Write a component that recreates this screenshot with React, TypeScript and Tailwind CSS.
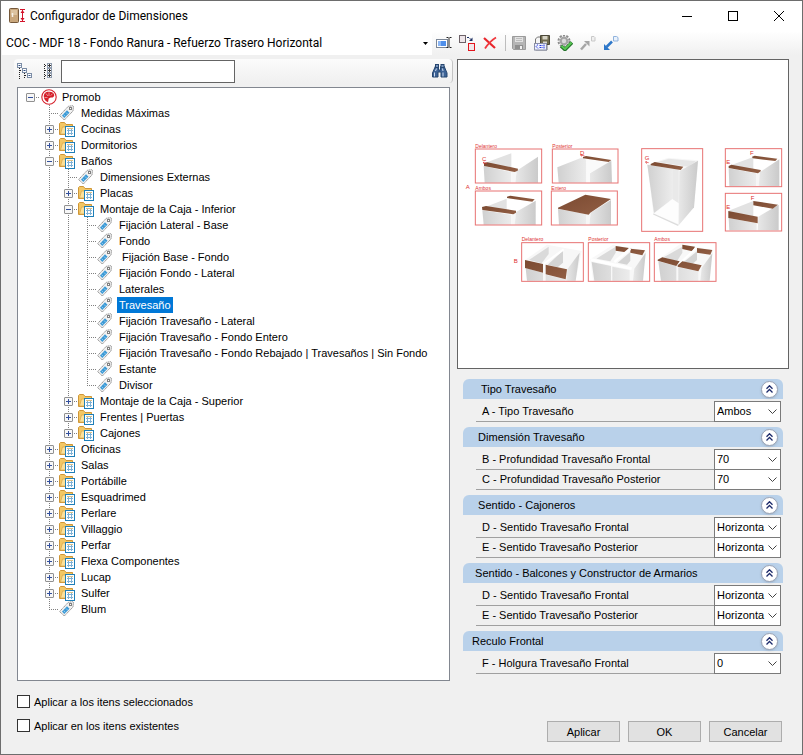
import { FunctionComponent, ReactNode } from "react";

type TreeNode = {
  label: string;
  kind: "root" | "folder" | "tag";
  selected?: boolean;
  children?: TreeNode[];
};

type Field = { label: string; value: string };
type Section = { title: string; fields: Field[] };

const folder = (label: string, children?: TreeNode[]): TreeNode => ({
  label,
  kind: "folder",
  children,
});

const tag = (label: string, selected?: boolean): TreeNode => ({
  label,
  kind: "tag",
  selected,
});

const TREE: TreeNode = {
  label: "Promob",
  kind: "root",
  children: [
    tag("Medidas Máximas"),
    folder("Cocinas"),
    folder("Dormitorios"),
    folder("Baños", [
      tag("Dimensiones Externas"),
      folder("Placas"),
      folder("Montaje de la Caja - Inferior", [
        tag("Fijación Lateral - Base"),
        tag("Fondo"),
        tag(" Fijación Base - Fondo"),
        tag("Fijación Fondo - Lateral"),
        tag("Laterales"),
        tag("Travesaño", true),
        tag("Fijación Travesaño - Lateral"),
        tag("Fijación Travesaño - Fondo Entero"),
        tag("Fijación Travesaño - Fondo Rebajado | Travesaños | Sin Fondo"),
        tag("Estante"),
        tag("Divisor"),
      ]),
      folder("Montaje de la Caja - Superior"),
      folder("Frentes | Puertas"),
      folder("Cajones"),
    ]),
    folder("Oficinas"),
    folder("Salas"),
    folder("Portábille"),
    folder("Esquadrimed"),
    folder("Perlare"),
    folder("Villaggio"),
    folder("Perfar"),
    folder("Flexa Componentes"),
    folder("Lucap"),
    folder("Sulfer"),
    tag("Blum"),
  ],
};

const SECTIONS: Section[] = [
  {
    title: "   Tipo Travesaño",
    fields: [{ label: "A - Tipo Travesaño", value: "Ambos" }],
  },
  {
    title: "  Dimensión Travesaño",
    fields: [
      { label: "B - Profundidad Travesaño Frontal", value: "70" },
      { label: "C - Profundidad Travesaño Posterior", value: "70" },
    ],
  },
  {
    title: "  Sentido - Cajoneros",
    fields: [
      { label: "D - Sentido Travesaño Frontal", value: "Horizonta" },
      { label: "E - Sentido Travesaño Posterior", value: "Horizonta" },
    ],
  },
  {
    title: " Sentido - Balcones y Constructor de Armarios",
    fields: [
      { label: "D - Sentido Travesaño Frontal", value: "Horizonta" },
      { label: "E - Sentido Travesaño Posterior", value: "Horizonta" },
    ],
  },
  {
    title: "Reculo Frontal",
    fields: [{ label: "F - Holgura Travesaño Frontal", value: "0" }],
  },
];

const Icon: FunctionComponent<{ children: ReactNode }> = ({ children }) => (
  <svg viewBox="0 0 16 16" className="w-4 h-4 shrink-0" fill="none">
    {children}
  </svg>
);

const AppIcon = () => (
  <svg viewBox="0 0 17 16" className="w-[17px] h-4 shrink-0" fill="none">
    <rect x="0.5" y="0.5" width="9" height="14" rx="1" fill="#c9a77c" stroke="#75583a" />
    <path d="M2 2h6v5H2z" fill="#dcc3a0" />
    <path d="M3.5 5v4" stroke="#f7f1e8" strokeWidth="1.5" />
    <path d="M11 1.5h5M11 13.5h5M13.5 2v11" stroke="#d3122a" />
    <path d="M11.500 5l2-3 2 3zM11.500 10l2 3 2-3z" fill="#d3122a" />
  </svg>
);

const PromobIcon = () => (
  <Icon>
    <circle cx="8" cy="8" r="7.2" fill="#fff" stroke="#d5202b" strokeWidth="1.1" />
    <path
      d="M8.500 2.800C5 2.300 2.700 4.500 2.800 7.500c0 2.500 1.600 4.800 4.200 5.700l.7-3.700 2-1c2.300.3 3.700-.9 3.500-2.800C12.700 3.900 10.900 2.900 8.500 2.800z"
      fill="#d5202b"
    />
    <path d="M8 3.500v3.500M5 4.500l2 2.500M3.500 8.500l3 0M9.500 6.500l2-1.500" stroke="#fff" strokeWidth="0.5" />
  </Icon>
);

const FolderIcon = () => (
  <Icon>
    <path d="M.5 13.500v-11l1-1h4l1.500 2h6.500v10z" fill="#f3c765" stroke="#cf9637" />
    <path d="M1.500 13l2-7h11l-1 7z" fill="#fbe09a" stroke="#d9a648" strokeWidth="0.7" />
    <rect x="6.500" y="5.500" width="9" height="10" fill="#fff" stroke="#1f7fb8" />
    <path d="M8 9.500h6M8 12.500h6M9.500 7.500v6.500M12.500 7.500v6.500" stroke="#7fb2d6" />
    <path d="M8 7.500h6" stroke="#d9c089" />
  </Icon>
);

const TagIcon = () => (
  <Icon>
    <path
      d="M.6 10.500L9.300 1.300l4.500-.6.700.6-.5 4.700-8.700 9z"
      fill="#f1f1f1"
      stroke="#929292"
      strokeDasharray="1.500 .5"
    />
    <path d="M3 10.500l5-5.200 2.500 2.400-5.200 5.300z" fill="#3c9ad6" />
    <path d="M4.700 9.700l1.500 1.600M7 7.500L8.500 9" stroke="#b8def5" strokeWidth="0.7" />
    <rect x="10.500" y="2.500" width="2" height="2" fill="#fff" stroke="#808080" />
  </Icon>
);

const NODE_ICONS = { root: PromobIcon, folder: FolderIcon, tag: TagIcon };

const RenameIcon = () => (
  <Icon>
    <rect x=".5" y="4.500" width="11" height="8" fill="#fff" stroke="#7c8797" />
    <rect x="2" y="6" width="8" height="5" fill="#4f8fea" />
    <path d="M2 6h3v5H2z" fill="#8bb6f4" />
    <path d="M10.500 2.500h2M13.500 2.500h2M13 3v9M10.500 12.500h2M13.500 12.500h2" stroke="#222" />
  </Icon>
);

const ReplaceIcon = () => (
  <Icon>
    <rect x=".5" y=".5" width="6" height="7" fill="#eee6ea" stroke="#6d6268" />
    <rect x="9.500" y="8.500" width="6" height="7" fill="#f1e7ea" stroke="#e3151d" />
    <path d="M8 2.500h2l2.500 2.500" stroke="#1c2f63" strokeDasharray="2 1" />
    <path d="M13.500 2.500V6H10z" fill="#1c2f63" />
  </Icon>
);

const DeleteIcon = () => (
  <Icon>
    <path d="M2 3l11 10" stroke="#e8252b" strokeWidth="2.200" />
    <path d="M14 2.500C9 5.500 6 9 3 13.500" stroke="#f0383d" strokeWidth="1.800" />
  </Icon>
);

const SaveIcon = () => (
  <Icon>
    <path d="M1.500 1.500h13v13h-12l-1-1z" fill="#b5b5b5" stroke="#9b9b9b" />
    <path d="M4 2h8v5H4z" fill="#e2e2e2" />
    <path d="M5 3.500h6M5 5.500h6" stroke="#bdbdbd" />
    <path d="M4 10h8v4H4z" fill="#8f8f8f" />
    <path d="M9 11h2v3H9z" fill="#f0f0f0" />
  </Icon>
);

const SaveAsIcon = () => (
  <Icon>
    <path d="M1.500 15V4l2-2H13v13z" fill="#f5f5f5" stroke="#777" />
    <path d="M6.500 .5h9v9h-9z" fill="#6f6a4f" stroke="#4a4738" />
    <path d="M8.500 1h5v3.500h-5z" fill="#d6d3c5" />
    <path d="M9 6.500h4v3H9z" fill="#d9d6cc" />
    <rect x=".5" y="8.500" width="12" height="6.500" fill="#eef1fc" stroke="#8a8fa8" />
    <path d="M4 9.500l-2 2 2 2M5.500 10.500h3M5.500 12.500h3M10 9.500v4" stroke="#2636e0" strokeDasharray="2 .5" />
  </Icon>
);

const GearCheckIcon = () => (
  <Icon>
    <circle cx="7" cy="6" r="5.500" stroke="#8d8d8d" strokeWidth="2" strokeDasharray="2.200 1.250" />
    <circle cx="7" cy="6" r="3.300" fill="#dcdcdc" stroke="#a5a5a5" strokeWidth="2.200" />
    <path d="M4 11l4 3.500L15 7.500" stroke="#23722a" strokeWidth="3.600" />
    <path d="M4.500 11L8 14l6.500-6.500" stroke="#58c752" strokeWidth="2" />
  </Icon>
);

// both arrows share the small page in the upper right corner
const ExportIcon = () => (
  <Icon>
    <path d="M1 14.500L6 9" stroke="#a6a6a6" strokeWidth="2.500" />
    <path d="M4 6h5.500v5.500z" fill="#a6a6a6" />
    <path d="M11.500 1.500h2.500l1 1v3.500h-3.500z" fill="#f0f0f0" stroke="#c8c8c8" />
  </Icon>
);

const ImportIcon = () => (
  <Icon>
    <path d="M3.500 12L9 6.500" stroke="#2d77c9" strokeWidth="2.500" />
    <path d="M1 9v6h6z" fill="#2d77c9" />
    <path d="M10.500 1.500h3l1.500 1v3.500h-4.500z" fill="#eaf2fc" stroke="#8fb2dd" />
  </Icon>
);

const CollapseIcon = () => (
  <Icon>
    <path d="M2.500 5v11M7.500 10v6M3 7.500h2M8 12.500h2" stroke="#222" strokeDasharray="1 1" />
    <g fill="#fff" stroke="#7b8ca5">
      <rect x=".5" y=".5" width="4" height="4" />
      <rect x="5.500" y="5.500" width="4" height="4" />
      <rect x="10.500" y="10.500" width="4" height="4" />
    </g>
    <path d="M1.500 2.500h2M6.500 7.500h2M11.500 12.500h2" stroke="#2d4e86" />
  </Icon>
);

const ExpandIcon = () => (
  <Icon>
    <path d="M4.500 1v15M5 2.500h2M5 7.500h2M5 12.500h2" stroke="#222" strokeDasharray="1 1" />
    <g fill="#fff" stroke="#8f9bad">
      <rect x="7.500" y=".5" width="4" height="4" />
      <rect x="7.500" y="5.500" width="4" height="4" />
      <rect x="7.500" y="10.500" width="4" height="4" />
    </g>
    <path d="M8 2.500h3M8 7.500h3M8 12.500h3M9.500 1v3M9.500 6v3M9.500 11v3" stroke="#333" />
  </Icon>
);

const BinocularsIcon = () => (
  <Icon>
    <path d="M3.500 3L.5 10v4h5.500V9h3v5h6v-4l-3-7-3.500.5V7h-2V3.500z" fill="#3d6396" stroke="#27466f" />
    <rect x="3.500" y="1.500" width="3" height="3" fill="#7895bd" stroke="#27466f" />
    <rect x="9" y="1.500" width="3" height="3" fill="#7895bd" stroke="#27466f" />
    <path d="M2.500 9.500v4M11 9.500v4M4.500 5.500l-1 2.500M10.500 5.500l.5 2.500" stroke="#d0ddf0" />
  </Icon>
);

const TOOLS: { label: string; icon: FunctionComponent }[] = [
  { label: "Guardar", icon: SaveIcon },
  { label: "Guardar como", icon: SaveAsIcon },
  { label: "Validar", icon: GearCheckIcon },
  { label: "Exportar", icon: ExportIcon },
  { label: "Importar", icon: ImportIcon },
];

const ToolButton: FunctionComponent<{ label: string; children: ReactNode }> = ({
  label,
  children,
}) => (
  <button
    type="button"
    aria-label={label}
    className="w-[23px] h-[23px] shrink-0 flex items-center justify-center"
  >
    {children}
  </button>
);

const TitleBar = () => (
  <header className="flex items-center h-[30px] pl-2 bg-white">
    <AppIcon />
    <h1 className="flex-1 pl-1 font-[Roboto,'Noto_Sans',sans-serif] text-[12px] leading-4">
      Configurador de Dimensiones
    </h1>
    <button type="button" aria-label="Minimizar" className="w-[46px] h-full flex items-center justify-center">
      <span className="w-[10px] h-px bg-black" />
    </button>
    <button type="button" aria-label="Maximizar" className="w-[46px] h-full flex items-center justify-center">
      <span className="w-[10px] h-[10px] border border-black" />
    </button>
    <button type="button" aria-label="Cerrar" className="w-[46px] h-full flex items-center justify-center">
      <svg viewBox="0 0 10 10" className="w-[10px] h-[10px]" stroke="#000" fill="none">
        <path d="M0 0l10 10M10 0L0 10" />
      </svg>
    </button>
  </header>
);

const Toolbar = () => (
  <div className="flex items-center h-6 pl-px bg-linear-to-b from-white to-[#f0f0f0]">
    <div className="relative w-[430px] h-full shrink-0">
      <select
        aria-label="Configuración"
        className="w-full h-full appearance-none bg-white pl-1 pr-3 font-[Roboto,'Noto_Sans',sans-serif] text-[12px] leading-4"
      >
        <option>COC - MDF 18 - Fondo Ranura - Refuerzo Trasero Horizontal</option>
      </select>
      <svg viewBox="0 0 5 3" className="absolute right-1 top-[11px] w-[5px] h-[3px] pointer-events-none">
        <path d="M0 0h5L2.500 3z" fill="#000" />
      </svg>
    </div>
    <div className="flex items-center">
      <ToolButton label="Renombrar">
        <RenameIcon />
      </ToolButton>
      <ToolButton label="Reemplazar">
        <ReplaceIcon />
      </ToolButton>
      <ToolButton label="Eliminar">
        <DeleteIcon />
      </ToolButton>
      <span className="w-px h-4 ml-1 mr-px bg-[#bdbdbd]" />
      {TOOLS.map(({ label, icon: ToolIcon }) => (
        <ToolButton key={label} label={label}>
          <ToolIcon />
        </ToolButton>
      ))}
    </div>
  </div>
);

const Guide: FunctionComponent<{ d: string }> = ({ d }) => (
  <svg viewBox="0 0 19 16" className="w-[19px] h-4 shrink-0" fill="none">
    <path d={d} stroke="#808080" strokeDasharray="1 1" />
  </svg>
);

const Expander: FunctionComponent<{ open: boolean; d: string }> = ({ open, d }) => (
  <button type="button" aria-label={open ? "Contraer" : "Expandir"} className="flex shrink-0">
    <svg viewBox="0 0 19 16" className="w-[19px] h-4" fill="none">
      <path d={d} stroke="#808080" strokeDasharray="1 1" />
      <rect x="5.500" y="4.500" width="8" height="8" rx="0.500" fill="#f7f7f7" stroke="#919191" />
      <path d={open ? "M7 8.500h5" : "M7 8.500h5M9.500 6v5"} stroke="#324f9c" />
    </svg>
  </button>
);

// `lines` tells, for each ancestor column, whether its guide runs on below this row
const TreeItem: FunctionComponent<{
  node: TreeNode;
  lines: boolean[];
  last: boolean;
}> = ({ node, lines, last }) => {
  const NodeIcon = NODE_ICONS[node.kind];
  const root = node.kind === "root";
  const vertical = root ? "" : last ? "M9.500 0v9" : "M9.500 0v16";
  const joint = vertical + "M9 8.500h10";

  return (
    <li role="treeitem" aria-selected={!!node.selected}>
      <div className="flex items-center h-4">
        {lines.map((on, i) => (
          <Guide key={i} d={on ? "M9.500 0v16" : ""} />
        ))}
        {node.kind === "tag" ? (
          <Guide d={joint} />
        ) : (
          <Expander open={!!node.children} d={joint} />
        )}
        <span className={`w-[19px] flex shrink-0 ${root ? "pl-px" : ""}`}>
          <NodeIcon />
        </span>
        <span
          className={`ml-px px-[2px] whitespace-pre leading-4 ${
            node.selected ? "bg-[#0078d7] text-white" : ""
          }`}
        >
          {node.label}
        </span>
      </div>
      {node.children && (
        <ul role="group">
          {node.children.map((child, i) => (
            <TreeItem
              key={child.label}
              node={child}
              lines={[...lines, !root && !last]}
              last={i === node.children!.length - 1}
            />
          ))}
        </ul>
      )}
    </li>
  );
};

const TreePanel = () => (
  <div className="flex flex-col min-w-0">
    <div className="flex items-center h-6 pl-[3px] pr-1 bg-linear-to-b from-[#fbfbfb] to-[#f0f0f0] border-r border-[#c4c4c4] rounded">
      <button type="button" aria-label="Contraer todo" className="mr-[7px]">
        <CollapseIcon />
      </button>
      <button type="button" aria-label="Expandir todo" className="mr-[5px]">
        <ExpandIcon />
      </button>
      <input
        type="text"
        aria-label="Buscar"
        className="w-[174px] h-[23px] px-1 bg-white border border-[#646464]"
      />
      <button type="button" aria-label="Buscar dimensión" className="ml-auto">
        <BinocularsIcon />
      </button>
    </div>
    <div className="flex-1 mt-1 ml-[3px] mr-[3px] pt-px pl-[3px] pb-4 bg-white border border-[#828790]">
      <ul role="tree" aria-label="Dimensiones">
        <TreeItem node={TREE} lines={[]} last />
      </ul>
    </div>
  </div>
);

const FRAMES = [
  { x: 52, y: 267, w: 199, h: 102, label: "Delantero" },
  { x: 283, y: 267, w: 197, h: 102, label: "Posterior" },
  { x: 52, y: 393, w: 199, h: 102, label: "Ambos" },
  { x: 280, y: 393, w: 198, h: 102, label: "Entero" },
  { x: 191, y: 548, w: 185, h: 116, label: "Delantero" },
  { x: 391, y: 548, w: 184, h: 116, label: "Posterior" },
  { x: 589, y: 548, w: 185, h: 116, label: "Ambos" },
  { x: 551, y: 266, w: 183, h: 248, label: "" },
  { x: 802, y: 266, w: 169, h: 114, label: "" },
  { x: 802, y: 400, w: 169, h: 113, label: "" },
];

const MARKS = [
  { x: 23, y: 388, t: "A" },
  { x: 167, y: 610, t: "B" },
  { x: 72, y: 303, t: "C" },
  { x: 366, y: 284, t: "D" },
  { x: 560, y: 301, t: "G" },
  { x: 805, y: 312, t: "E" },
  { x: 876, y: 286, t: "F" },
  { x: 805, y: 447, t: "E" },
  { x: 878, y: 421, t: "F" },
];

const Preview = () => (
  <svg
    viewBox="0 0 990 924"
    role="img"
    aria-label="Tipos de travesaño"
    className="block w-full h-auto"
    fontFamily="Liberation Sans, sans-serif"
  >
    <defs>
      <linearGradient id="inner" x1="0" x2="1">
        <stop offset="0" stopColor="#d0d0d0" />
        <stop offset="1" stopColor="#ececec" />
      </linearGradient>
      <linearGradient id="outer" x1="0" x2="1">
        <stop offset="0" stopColor="#e8e8e8" />
        <stop offset="1" stopColor="#cacaca" />
      </linearGradient>
      <linearGradient id="wood" x1="0" y1="0" x2="1" y2="1">
        <stop offset="0" stopColor="#7b4a31" />
        <stop offset="1" stopColor="#925f45" />
      </linearGradient>
    </defs>

    {/* A - delantero, ambos */}
    <g transform="translate(36 246)">
      <path d="M42 64L124 34V80L42 66z" fill="#e2e2e2" />
      <path d="M41 72L124 90V122H44z" fill="url(#inner)" />
      <path d="M124 88L140 88L136 122H124z" fill="#f6f6f6" />
      <path d="M140 86L204 44V122H136z" fill="url(#outer)" />
      <path d="M42 63L52 61L144 80L143 86L134 90L42 72z" fill="url(#wood)" />

      <path d="M38 198L110 170V204L40 200z" fill="#e2e2e2" />
      <path d="M37 205L124 218V248H41z" fill="url(#inner)" />
      <path d="M124 216L138 212L134 248H124z" fill="#f6f6f6" />
      <path d="M138 210L197 176V248H134z" fill="url(#outer)" />
      <path d="M36 195L48 192L138 206V212L130 217L37 204z" fill="url(#wood)" />
      <path d="M111 164L121 161L194 172L187 179L111 168z" fill="url(#wood)" />
    </g>

    {/* A - posterior, entero */}
    <g transform="translate(264 246)">
      <path d="M34 76L110 46L121 54V122H38z" fill="url(#inner)" />
      <path d="M121 52L190 62L132 92V122H121z" fill="#fafafa" />
      <path d="M132 94L196 56L198 122H132z" fill="url(#outer)" />
      <path d="M111 45L120 42L196 54L188 60L111 49z" fill="url(#wood)" />

      <path d="M36 201L120 216V248H39z" fill="url(#inner)" />
      <path d="M120 216L134 214L130 248H120z" fill="#f6f6f6" />
      <path d="M134 212L195 174V248H130z" fill="url(#outer)" />
      <path d="M36 197L118 158L195 171L133 212L128 218L36 200z" fill="url(#wood)" />
    </g>

    {/* B - delantero, posterior, ambos */}
    <g transform="translate(171 528)">
      <path d="M30 72L96 26L200 45L182 134H36z" fill="#f7f7f7" />
      <path d="M42 72L101 32V54L80 82z" fill="#dadada" />
      <path d="M98 86L144 44V80L128 94z" fill="#d4d4d4" />
      <path d="M32 96L84 110V134H36zM92 116L152 130V134H92z" fill="url(#inner)" />
      <path d="M86 84L146 40" stroke="#fff" strokeWidth="6" />
      <path d="M157 100L194 50L182 134H154z" fill="url(#outer)" />
      <path d="M30 72L84 84V110L30 96zM92 86L156 100L152 130L92 115z" fill="url(#wood)" />

      <path d="M226 70L294 26L394 44L380 134H234z" fill="#f8f8f8" />
      <path d="M244 68L302 32V50L286 76z" fill="#dadada" />
      <path d="M308 80L346 48V74L336 86z" fill="#d4d4d4" />
      <path d="M230 78L288 90V134H238zM292 92L344 102V134H292z" fill="url(#inner)" />
      <path d="M302 30L342 36L332 49L302 44zM346 38L390 43L382 58L346 50z" fill="url(#wood)" />
      <path d="M228 71L350 98M298 78L346 38" stroke="#fff" strokeWidth="8" />
      <path d="M358 98L392 50L384 134H354z" fill="url(#outer)" />

      <path d="M430 70L496 24L594 42L580 134H438z" fill="#f8f8f8" />
      <path d="M446 64L502 32V50L486 76z" fill="#dadada" />
      <path d="M506 78L546 46V72L532 84z" fill="#d4d4d4" />
      <path d="M430 76L484 90V134H438zM490 94L550 106V134H490z" fill="url(#inner)" />
      <path d="M502 26L540 32L532 46L502 39zM546 36L592 42L586 56L546 50z" fill="url(#wood)" />
      <path d="M488 88L544 36" stroke="#fff" strokeWidth="6" />
      <path d="M560 96L592 52L584 134H556z" fill="url(#outer)" />
      <path d="M428 71L442 64L494 76L484 90L428 74zM488 88L502 76L560 88L550 106L488 92z" fill="url(#wood)" />
    </g>

    {/* G */}
    <path d="M568 314L630 293L721 301L708 442L661 496L586 462z" fill="#f7f7f7" />
    <path d="M568 314L643 326V417L588 459z" fill="url(#inner)" />
    <path d="M643 324L662 330V430L643 417z" fill="#e9e9e9" />
    <path d="M588 461L643 418L661 430V492z" fill="#fdfdfd" />
    <path d="M586 462L661 496" stroke="#dcdcdc" strokeWidth="4" />
    <path d="M632 296L714 304L690 320L600 306z" fill="#e6e6e6" />
    <path d="M664 334L720 302L708 442L662 496z" fill="url(#outer)" />
    <path d="M578 312L590 306L676 320L668 330L578 316z" fill="url(#wood)" />

    {/* E / F - horizontal */}
    <path d="M812 318L886 291V328L812 322z" fill="#e2e2e2" />
    <path d="M812 325L894 340V378H814z" fill="url(#inner)" />
    <path d="M894 338L908 336L902 378H894z" fill="#f6f6f6" />
    <path d="M906 336L964 298V378H902z" fill="url(#outer)" />
    <path d="M812 318L820 314L908 330V334L900 340L812 324z" fill="url(#wood)" />
    <path d="M882 290L890 287L958 296L952 303L884 295z" fill="url(#wood)" />

    {/* E / F - vertical */}
    <path d="M812 452L886 423V468L812 460z" fill="#e2e2e2" />
    <path d="M812 474L896 490V511H814z" fill="url(#inner)" />
    <path d="M901 470L962 434V511H899z" fill="url(#outer)" />
    <path d="M886 423L960 434L944 446L886 436z" fill="url(#wood)" />
    <path d="M811 453L899 470V490L811 474z" fill="url(#wood)" />

    {FRAMES.map(({ x, y, w, h, label }, i) => (
      <g key={i}>
        <rect x={x} y={y} width={w} height={h} fill="none" stroke="#e87272" strokeWidth="3" />
        <text x={x} y={y - 4} fontSize="15" fill="#dd3333">
          {label}
        </text>
      </g>
    ))}
    {MARKS.map(({ x, y, t }, i) => (
      <text key={i} x={x} y={y} fontSize="18" fill="#dd2f2f">
        {t}
      </text>
    ))}
    <path
      d="M75 308l12 2M78 305l-2 4 4 3M368 285l12 3M371 282l-3 4 4 3M562 306l10 2M566 303l-3 4 4 4"
      stroke="#dd2f2f"
      strokeWidth="2"
      fill="none"
    />
  </svg>
);

const SectionPanel: FunctionComponent<{ section: Section; id: string }> = ({ section, id }) => (
  <section>
    <div className="flex items-center justify-between h-5 pl-[9px] pr-[5px] bg-[#b9d1ea] rounded-t-md">
      <h2 className="whitespace-pre leading-4">{section.title}</h2>
      <button
        type="button"
        aria-label="Contraer sección"
        className="w-[17px] h-[17px] rounded-full bg-white border border-[#9aa3b5] shadow flex items-center justify-center"
      >
        <svg viewBox="0 0 7 8" className="w-[7px] h-2" fill="none" stroke="#1d2b6b" strokeWidth="1.300">
          <path d="M.5 3.700l3-3 3 3M.5 7.500l3-3 3 3" />
        </svg>
      </button>
    </div>
    <div className="pt-[2px] pl-[13px] pr-[2px]">
      {section.fields.map(({ label, value }, i) => (
        <div key={label} className={`flex h-[21px] ${i > 0 ? "-mt-px" : ""}`}>
          <label
            htmlFor={`${id}-${i}`}
            className="flex-1 flex items-center pl-[6px] border-b border-[#a0a0a0] leading-4"
          >
            {label}
          </label>
          <div className="relative w-[67px]">
            <select
              id={`${id}-${i}`}
              className="w-full h-full appearance-none pl-[2px] pb-[2px] bg-white border border-[#7a7a7a]"
            >
              <option>{value}</option>
            </select>
            <svg
              viewBox="0 0 9 5"
              className="absolute right-1 top-2 w-[9px] h-[5px] pointer-events-none"
              fill="none"
              stroke="#444"
            >
              <path d="M.5 .5l4 4 4-4" />
            </svg>
          </div>
        </div>
      ))}
    </div>
  </section>
);

const CheckRow: FunctionComponent<{ label: string }> = ({ label }) => (
  <label className="flex items-center gap-1 h-[17px]">
    <input type="checkbox" className="appearance-none w-[13px] h-[13px] bg-white border border-[#333] checked:bg-[#0078d7]" />
    {label}
  </label>
);

const Footer = () => (
  <footer className="flex items-end justify-between pt-3 pl-4 pr-5 pb-3">
    <div className="flex flex-col gap-[7px] pb-2">
      <CheckRow label="Aplicar a los itens seleccionados" />
      <CheckRow label="Aplicar en los itens existentes" />
    </div>
    <div className="flex gap-2">
      {["Aplicar", "OK", "Cancelar"].map((label) => (
        <button
          key={label}
          type="button"
          className="w-[73px] h-[21px] bg-[#e1e1e1] border border-[#adadad]"
        >
          {label}
        </button>
      ))}
    </div>
  </footer>
);

export default function App() {
  return (
    <div className="flex flex-col w-full min-h-screen bg-[#f0f0f0] border border-[#6d6d6d] text-black font-['Liberation_Sans',Arial,sans-serif] text-[11px] leading-4">
      <TitleBar />
      <Toolbar />
      <main className="flex-1 grid grid-cols-[minmax(0,1fr)_332px] gap-1 pt-1 pl-[13px] pr-[13px]">
        <TreePanel />
        <div className="flex flex-col min-w-0">
          <div className="bg-white border border-[#646464]">
            <Preview />
          </div>
          <div className="flex flex-col gap-[5px] pt-[10px] pl-[6px] pr-[6px]">
            {SECTIONS.map((section, i) => (
              <SectionPanel key={section.title} section={section} id={`section-${i}`} />
            ))}
          </div>
        </div>
      </main>
      <Footer />
    </div>
  );
}
